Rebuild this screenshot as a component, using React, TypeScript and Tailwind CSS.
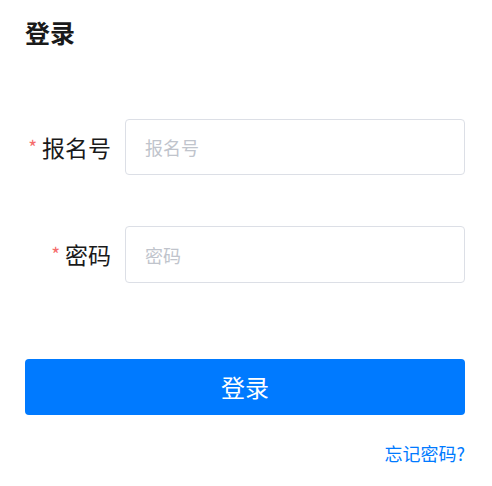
import React from "react";

export default function App() {
  const font = { fontFamily: '"Noto Sans CJK SC", "Noto Sans", sans-serif' };
  return (
    <div className="w-[492px] h-[486px] bg-white pl-[25px] pr-[27px] pt-[14px]" style={font}>
      <h1 className="text-[25px] font-bold leading-[36px] text-[#1a1a1a]">登录</h1>
      <form className="mt-[69px] flex flex-col">
        <div className="flex items-center h-[56px]">
          <label className="w-[86px] flex justify-end items-center text-[23px] text-[#1a1a1a]">
            <span className="text-[#f56c6c] text-[19px] mr-[5px]">*</span>报名号
          </label>
          <input
            className="ml-[14px] flex-1 h-[56px] border border-[#dcdfe6] rounded-[4px] px-[19px] text-[18px] placeholder:text-[#c0c4cc] outline-none"
            placeholder="报名号"
          />
        </div>
        <div className="flex items-center h-[57px] mt-[51px]">
          <label className="w-[86px] flex justify-end items-center text-[23px] text-[#1a1a1a]">
            <span className="text-[#f56c6c] text-[19px] mr-[5px]">*</span>密码
          </label>
          <input
            type="password"
            className="ml-[14px] flex-1 h-[57px] border border-[#dcdfe6] rounded-[4px] px-[19px] text-[18px] placeholder:text-[#c0c4cc] outline-none"
            placeholder="密码"
          />
        </div>
        <button
          type="button"
          className="mt-[76px] h-[56px] w-full rounded-[4px] bg-[#007aff] text-white text-[24px]"
        >
          登录
        </button>
        <div className="mt-[26px] flex justify-end">
          <a className="text-[18px] text-[#007aff] leading-[24px]">忘记密码?</a>
        </div>
      </form>
    </div>
  );
}
